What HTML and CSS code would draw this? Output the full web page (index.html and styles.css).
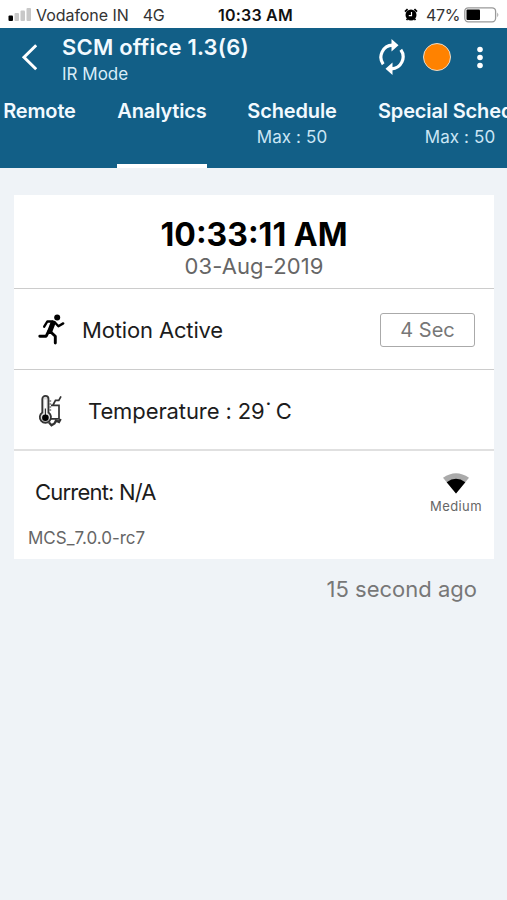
FILE: index.html
```html
<!DOCTYPE html>
<html lang="en">
<head>
    <meta charset="utf-8">
    <meta name="viewport" content="width=device-width, initial-scale=1">
    <title>SCM office 1.3(6)</title>
    <link rel="stylesheet" href="styles.css">
</head>
<body>
    <div class="status-bar">
        <div class="carrier">
            <svg class="signal" width="24" height="15" viewBox="0 0 24 15">
                <rect x="0.5" y="8.5" width="4.5" height="5.5" rx="1" fill="#000"/>
                <rect x="6.5" y="6" width="4.5" height="8" rx="1" fill="#c8c8c8"/>
                <rect x="12.5" y="3.5" width="4.5" height="10.5" rx="1" fill="#c8c8c8"/>
                <rect x="18.5" y="1" width="4.5" height="13" rx="1" fill="#c8c8c8"/>
            </svg>
            <span class="carrier-name">Vodafone IN</span>
            <span class="network">4G</span>
        </div>
        <span class="clock">10:33 AM</span>
        <div class="power">
            <svg class="alarm" width="14" height="14" viewBox="0 0 14 14">
                <circle cx="7" cy="7" r="5.5"/>
                <path d="M1 3.6 3.6 1.1M13 3.6 10.4 1.1" stroke="#000" stroke-width="1.8"/>
                <path d="M3.4 10.9 2.6 12.2M10.6 10.9 11.4 12.2" stroke="#000" stroke-width="1.6"/>
                <path d="M7.5 4V7.6H4.8" fill="none" stroke="#fff" stroke-width="1.2"/>
            </svg>
            <span class="percent">47%</span>
            <svg class="battery" width="36" height="16" viewBox="0 0 36 16">
                <rect x="0.8" y="0.8" width="30.8" height="14" rx="3.5" fill="#fff" stroke="#999" stroke-width="1.3"/>
                <rect x="2.5" y="2.5" width="13.5" height="10.6" rx="1"/>
                <path d="M33.3 5.5q2 2.3 0 4.8z" fill="#999"/>
            </svg>
        </div>
    </div>

    <header class="header">
        <div class="toolbar">
            <svg class="back" width="16" height="27" viewBox="0 0 16 27">
                <path d="M15.2 1.3 3 13.3 15.2 25.3" fill="none" stroke="#fff" stroke-width="3"/>
            </svg>
            <div class="heading">
                <div class="title">SCM office 1.3(6)</div>
                <div class="mode">IR Mode</div>
            </div>
            <svg class="refresh" width="28" height="38" viewBox="0 0 28 38">
                <path d="M5.2 26.2A12 12 0 0 1 14.5 7.2M22.8 11.8A12 12 0 0 1 13.5 30.8" fill="none" stroke="#fff" stroke-width="3.2"/>
                <path d="M13.5 1 20.5 7.2 13.5 13.4zM14.5 24.6 7.5 30.8 14.5 37z" fill="#fff"/>
            </svg>
            <span class="status-dot"></span>
            <svg class="more" width="6" height="24" viewBox="0 0 6 24">
                <circle cx="3" cy="3.5" r="2.8"/>
                <circle cx="3" cy="11.5" r="2.8"/>
                <circle cx="3" cy="19.5" r="2.8"/>
            </svg>
        </div>

        <!-- Scrolling tabs, the last one runs off the screen -->
        <nav class="tabs">
            <div class="tab remote">Remote</div>
            <div class="tab analytics active">Analytics</div>
            <div class="tab schedule">Schedule<small>Max : 50</small></div>
            <div class="tab special">Special Schedule<small>Max : 50</small></div>
        </nav>
    </header>

    <main class="content">
        <section class="card">
            <div class="datetime">
                <div class="time">10:33:11 AM</div>
                <div class="date">03-Aug-2019</div>
            </div>
            <div class="row">
                <svg class="motion-icon" width="28" height="32" viewBox="0 0 28 32">
                    <circle cx="19.2" cy="3.4" r="3"/>
                    <g fill="none" stroke="#000" stroke-linecap="round" stroke-linejoin="round">
                        <path d="M15 9 11.7 17.5" stroke-width="5"/>
                        <path d="M14.5 7.5H9.3L6.2 12.7M16.5 8 20.4 12.2 25.2 9.4" stroke-width="2.4"/>
                        <path d="M10.5 17.5 8.2 22.2H1.8M13 18.3 17.3 22.2V29" stroke-width="2.9"/>
                    </g>
                </svg>
                <span class="label motion">Motion Active</span>
                <span class="interval">4 Sec</span>
            </div>
            <div class="row">
                <svg class="temp-icon" width="25" height="34" viewBox="0 0 25 34">
                    <g fill="none" stroke="#333" stroke-width="1.4">
                        <path d="M13 11.3h8v13.5H13M15 11l2.5-4.7h3.3l2.2-4" stroke-width="1.7"/>
                        <path d="M11 28.5l2.5 2.7 3-1.7 1.5-3 3 1.5 1.7-3" stroke-width="2.3"/>
                        <path d="M4.3 18.5V5a3 3 0 0 1 6.2 0V18.5a5.6 5.6 0 1 1-6.2 0z" fill="#d9d9d9" stroke-width="1.8"/>
                        <path d="M7.4 5.5v17" stroke="#fff" stroke-width="2.3"/>
                        <path d="M7.4 14.5v7" stroke-width="1.2"/>
                        <path d="M11.5 7h1.7M11.5 10h1.7M11.5 13h1.7M11.5 16h1.7" stroke-width="1"/>
                    </g>
                    <circle cx="7.4" cy="23.7" r="3.3"/>
                </svg>
                <span class="label temperature">Temperature : 29<span class="degree">˙</span>C</span>
            </div>
            <div class="row info">
                <div class="device">
                    <div class="current">Current: N/A</div>
                    <div class="version">MCS_7.0.0-rc7</div>
                </div>
                <div class="wifi">
                    <svg width="26" height="21" viewBox="0 0 26 21">
                        <path d="M0 4.8Q13-4.2 26 4.8L13 20.5z" fill="#aaa"/>
                        <path d="M3.7 9.2Q13 2.3 22.3 9.2L13 20.5z"/>
                    </svg>
                    <span>Medium</span>
                </div>
            </div>
        </section>
        <div class="updated">15 second ago</div>
    </main>
</body>
</html>
```
FILE: styles.css
```css
* {
    box-sizing: border-box;
}

body {
    margin: 0;
    height: 900px;
    overflow: hidden;
    background: #eff3f7;
    font-family: Inter, "Liberation Sans", sans-serif;
    color: #1c1c1c;
}

svg {
    display: block;
    flex: none;
}

.status-bar {
    display: grid;
    grid-template-columns: 1fr auto 1fr;
    align-items: center;
    height: 28px;
    padding: 1px 8px 0;
    background: #fff;
    font-size: 16px;
    line-height: 20px;
    color: #333;
}

.carrier, .power {
    display: flex;
    align-items: center;
}

.carrier-name {
    margin-left: 4px;
    letter-spacing: -0.05px;
}

.network {
    margin-left: 14px;
    letter-spacing: -0.3px;
}

.clock {
    padding-left: 4px;
    font-weight: 600;
    letter-spacing: 0.2px;
    color: #111;
}

.power {
    justify-content: flex-end;
    margin-right: -1px;
}

.percent {
    margin: 0 4px 0 8px;
    letter-spacing: -0.4px;
}

.header {
    height: 140px;
    background: #125f87;
    color: #f2faff;
}

.toolbar {
    display: flex;
    height: 66px;
    padding-left: 21px;
}

.back {
    margin-top: 16px;
}

.heading {
    width: 341px;
    padding: 5px 0 0 25px;
}

.title {
    font-size: 22px;
    font-weight: 600;
    line-height: 28px;
    letter-spacing: 0.2px;
}

.mode {
    font-size: 17px;
    line-height: 26px;
    color: #d9edf8;
}

.refresh {
    margin-top: 10px;
}

.status-dot {
    flex: none;
    width: 28px;
    height: 28px;
    margin: 15px 0 0 17px;
    border: 1.5px solid #e8dccb;
    border-radius: 50%;
    background: #ff8200;
}

.more {
    margin: 18px 0 0 26px;
    fill: #fff;
}

.tabs {
    display: flex;
    height: 74px;
    overflow: hidden;
    white-space: nowrap;
}

.tab {
    flex: none;
    padding-top: 5px;
    text-align: center;
    font-size: 20px;
    font-weight: 600;
    line-height: 25px;
    letter-spacing: -0.15px;
}

.tab small {
    display: block;
    font-size: 17px;
    font-weight: 400;
    line-height: 27px;
    letter-spacing: 0.1px;
    color: #cbe6f5;
}

.remote {
    margin-left: 2px;
    width: 75px;
}

.analytics {
    margin-left: 40px;
    width: 90px;
}

.schedule {
    margin-left: 40px;
    width: 90px;
}

.special {
    margin-left: 41px;
    width: 164px;
}

.active {
    border-bottom: 4px solid #fff;
}

.content {
    padding: 27px 13px 0 14px;
}

.card {
    background: #fff;
}

.datetime {
    height: 94px;
    padding-top: 20px;
    text-align: center;
    border-bottom: 1px solid #ccc;
}

.time {
    font-size: 32px;
    font-weight: 700;
    line-height: 39px;
    color: #000;
}

.date {
    font-size: 22px;
    line-height: 25px;
    letter-spacing: 0.1px;
    color: #666;
}

.row {
    display: flex;
    align-items: center;
    height: 81px;
    padding: 1px 19px 0 24px;
    border-bottom: 1px solid #ccc;
}

.row:nth-child(3) {
    padding-top: 3px;
    border-bottom: 2px solid #e0e0e0;
}

.label, .current {
    font-size: 22px;
}

.motion {
    margin-left: 16px;
    letter-spacing: -0.15px;
}

.temperature {
    margin-left: 25px;
    letter-spacing: -0.1px;
}

.degree {
    padding: 0 5px 0 1px;
}

.interval {
    width: 95px;
    height: 34px;
    margin-left: auto;
    border: 1.5px solid #aaa;
    border-radius: 3px;
    text-align: center;
    font-size: 20px;
    line-height: 33px;
    color: #777;
}

.info {
    height: 108px;
    align-items: flex-start;
    justify-content: space-between;
    padding: 0 12px 0 14px;
    border-bottom: 0;
}

.current {
    padding: 27px 0 0 7px;
    line-height: 28px;
    letter-spacing: -0.8px;
}

.version {
    margin-top: 21px;
    font-size: 17px;
    line-height: 22px;
    color: #666;
}

.wifi {
    display: flex;
    flex-direction: column;
    align-items: center;
    padding-top: 22px;
    font-size: 13px;
    line-height: 24px;
    letter-spacing: 0.4px;
    color: #666;
}

.updated {
    padding: 16px 17px 0 0;
    text-align: right;
    font-size: 22px;
    line-height: 28px;
    color: #777;
}
```
